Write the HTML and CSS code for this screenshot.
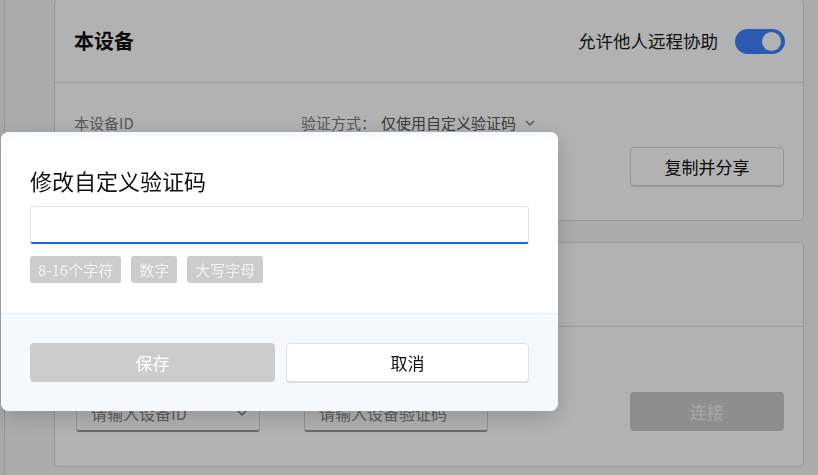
FILE: index.html
```html
<!DOCTYPE html>
<html>
<head>
    <title>远程协助</title>
    <meta charset="UTF-8">
    <link rel="stylesheet" href="styles.css">
</head>
<body>
    <div class="layout">
        <!-- Sidebar strip -->
        <div class="sidebar"></div>

        <!-- Main content -->
        <div class="main">
            <!-- Card: this device -->
            <div class="card card-top">
                <div class="card-header">
                    <span class="card-title">本设备</span>
                    <div class="header-right">
                        <span class="toggle-label">允许他人远程协助</span>
                        <span class="toggle on"><span class="knob"></span></span>
                    </div>
                </div>
                <div class="card-body device-body">
                    <div class="info-row">
                        <span class="info-label id-label">本设备ID</span>
                        <span class="info-label">验证方式：</span>
                        <span class="verify-mode">仅使用自定义验证码</span>
                        <svg class="chevron" width="10" height="6" viewBox="0 0 10 6"><polyline points="1,1 5,5 9,1" fill="none" stroke="#666" stroke-width="1.2"/></svg>
                    </div>
                    <div class="id-row">
                        <!-- device id sits under the dialog -->
                        <span class="device-id"></span>
                        <button class="btn btn-outline">复制并分享</button>
                    </div>
                </div>
            </div>

            <!-- Card: remote control -->
            <div class="card card-connect">
                <div class="card-header"></div>
                <div class="card-body connect-body">
                    <div class="field select-field">
                        <span class="placeholder">请输入设备ID</span>
                        <svg class="chevron" width="10" height="6" viewBox="0 0 10 6"><polyline points="1,1 5,5 9,1" fill="none" stroke="#666" stroke-width="1.2"/></svg>
                    </div>
                    <div class="field">
                        <span class="placeholder">请输入设备验证码</span>
                    </div>
                    <button class="btn btn-disabled connect-btn">连接</button>
                </div>
            </div>
        </div>
    </div>

    <!-- Modal overlay -->
    <div class="mask"></div>
    <div class="dialog">
        <div class="dialog-body">
            <div class="dialog-title">修改自定义验证码</div>
            <input class="code-input" type="text">
            <div class="rules">
                <span class="rule">8-16个字符</span>
                <span class="rule">数字</span>
                <span class="rule">大写字母</span>
            </div>
        </div>
        <div class="dialog-footer">
            <button class="dbtn dbtn-save" disabled>保存</button>
            <button class="dbtn dbtn-cancel">取消</button>
        </div>
    </div>
</body>
</html>
```

FILE: styles.css
```css
/* --- Base --- */
body {
    margin: 0;
    padding: 0;
    font-family: "Noto Sans CJK SC", "Noto Sans", sans-serif;
    background-color: #f7f7f7;
    color: #1a1a1a;
    overflow: hidden;
    height: 475px;
}
.layout {
    display: flex;
    height: 100%;
}
.sidebar {
    width: 4px;
    flex-shrink: 0;
    background-color: #f2f2f2;
    border-right: 1px solid #d6d6d6;
}
.main {
    padding-left: 49px;
    width: 750px;
    margin-top: -1px;
}

/* --- Cards --- */
.card {
    background-color: #fff;
    border: 1px solid #dcdcdc;
    border-radius: 4px;
}
.card-top { margin-bottom: 21px; }
.card-header {
    height: 83px;
    box-sizing: border-box;
    display: flex;
    align-items: center;
    justify-content: space-between;
    padding: 0 18px 0 19px;
    border-bottom: 1px solid #dcdcdc;
}
.card-connect .card-header { height: 84px; }
.card-title {
    font-size: 20px;
    font-weight: 700;
    color: #111;
    line-height: 28px;
}
.header-right {
    display: flex;
    align-items: center;
    gap: 17px;
}
.toggle-label {
    font-size: 17.5px;
    color: #1a1a1a;
    line-height: 24px;
}
.toggle {
    width: 50px;
    height: 25px;
    border-radius: 13px;
    background-color: #3d82ff;
    display: flex;
    align-items: center;
    justify-content: flex-end;
    padding: 0 4px;
    box-sizing: border-box;
}
.knob {
    width: 19px;
    height: 19px;
    border-radius: 50%;
    background-color: #fff;
}

/* --- Device body --- */
.device-body {
    padding: 30px 19px 34px;
}
.info-row {
    display: flex;
    align-items: center;
    height: 20px;
    font-size: 15px;
    line-height: 20px;
}
.info-label { color: #7d7d7d; }
.id-label { width: 227px; }
.verify-mode {
    color: #555;
    margin-left: 5px;
}
.info-row .chevron { margin-left: 9px; }
.id-row {
    margin-top: 14px;
    display: flex;
    align-items: center;
    justify-content: space-between;
    height: 39px;
}
.btn {
    font-family: inherit;
    font-size: 17px;
    height: 39px;
    width: 154px;
    border-radius: 4px;
    cursor: pointer;
}
.btn-outline {
    background-color: #fff;
    border: 1px solid #d6d6d6;
    box-shadow: 0 1px 0 rgba(0, 0, 0, .12);
    color: #111;
}
.btn-disabled {
    background-color: #cccccc;
    border: none;
    color: #f2f2f2;
}

/* --- Connect body --- */
.connect-body {
    display: flex;
    align-items: flex-end;
    padding: 65px 19px 34px 21px;
}
.field {
    width: 184px;
    height: 37px;
    box-sizing: border-box;
    border: 1px solid #d6d6d6;
    border-bottom: 2px solid #9a9a9a;
    border-radius: 3px;
    display: flex;
    align-items: center;
    justify-content: space-between;
    padding: 0 12px 0 14px;
    margin-right: 44px;
}
.placeholder {
    font-size: 16px;
    color: #888;
}
.connect-btn { margin-left: auto; margin-bottom: 1px; }

/* --- Modal --- */
.mask {
    position: fixed;
    inset: 0;
    background-color: rgba(0, 0, 0, .3);
}
.dialog {
    position: fixed;
    left: 1px;
    top: 132px;
    width: 557px;
    border-radius: 8px;
    overflow: hidden;
    background-color: #fff;
    box-shadow: 0 6px 24px rgba(0, 0, 0, .18);
}
.dialog-body {
    padding: 33px 29px 30px;
    background: linear-gradient(#f4f8fc, #fff 9px);
}
.dialog-title {
    font-size: 22px;
    line-height: 30px;
    color: #111;
}
.code-input {
    display: block;
    margin-top: 11px;
    width: 100%;
    height: 38px;
    box-sizing: border-box;
    border: 1px solid #e4e4e4;
    border-bottom: 2px solid #1a66e0;
    border-radius: 3px;
    outline: none;
    font-size: 16px;
    padding: 0 10px;
}
.rules {
    display: flex;
    gap: 10px;
    margin-top: 12px;
}
.rule {
    height: 27px;
    line-height: 27px;
    padding: 0 8px;
    border-radius: 3px;
    background-color: #cccccc;
    color: #f3f3f3;
    font-size: 15px;
}
.dialog-footer {
    border-top: 1px solid #e6ebf0;
    background-color: #f6f9fc;
    padding: 29px;
    display: flex;
    gap: 11px;
}
.dbtn {
    font-family: inherit;
    font-size: 17px;
    height: 39px;
    border-radius: 4px;
}
.dbtn-save {
    width: 245px;
    background-color: #cccccc;
    border: none;
    color: #fff;
}
.dbtn-cancel {
    width: 243px;
    background-color: #fff;
    border: 1px solid #e2e2e2;
    box-shadow: 0 1px 0 rgba(0, 0, 0, .12);
    color: #111;
    cursor: pointer;
}
```
